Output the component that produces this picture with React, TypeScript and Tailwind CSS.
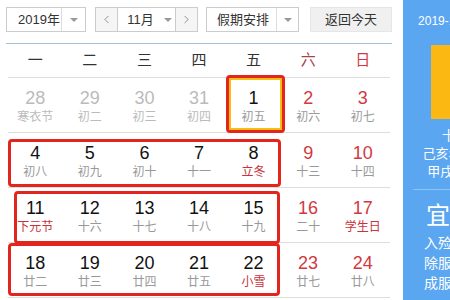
import { ChevronLeft, ChevronRight } from "lucide-react";

type Day = { n: number; l: string; prev?: boolean; fest?: boolean };

const weeks: Day[][] = [
  [
    { n: 28, l: "寒衣节", prev: true },
    { n: 29, l: "初二", prev: true },
    { n: 30, l: "初三", prev: true },
    { n: 31, l: "初四", prev: true },
    { n: 1, l: "初五" },
    { n: 2, l: "初六" },
    { n: 3, l: "初七" },
  ],
  [
    { n: 4, l: "初八" },
    { n: 5, l: "初九" },
    { n: 6, l: "初十" },
    { n: 7, l: "十一" },
    { n: 8, l: "立冬", fest: true },
    { n: 9, l: "十三" },
    { n: 10, l: "十四" },
  ],
  [
    { n: 11, l: "下元节", fest: true },
    { n: 12, l: "十六" },
    { n: 13, l: "十七" },
    { n: 14, l: "十八" },
    { n: 15, l: "十九" },
    { n: 16, l: "二十" },
    { n: 17, l: "学生日", fest: true },
  ],
  [
    { n: 18, l: "廿二" },
    { n: 19, l: "廿三" },
    { n: 20, l: "廿四" },
    { n: 21, l: "廿五" },
    { n: 22, l: "小雪", fest: true },
    { n: 23, l: "廿七" },
    { n: 24, l: "廿八" },
  ],
];

const heads = ["一", "二", "三", "四", "五", "六", "日"];

function Caret() {
  return <span className="w-0 h-0 border-x-[4px] border-x-transparent border-t-[4px] border-t-[#999]" />;
}

function Cell({ d, weekend }: { d: Day; weekend: boolean }) {
  const numColor = d.prev ? "text-[#bbb]" : weekend ? "text-[#d2393f]" : "text-[#111]";
  const lunColor = d.prev ? "text-[#bbb]" : d.fest ? "text-[#c8323a]" : "text-[#999]";
  return (
    <div className="flex flex-col items-center pt-[10px]">
      <span className={`text-[18px] leading-[20px] ${numColor}`}>{d.n}</span>
      <span className={`mt-[1px] text-[12px] leading-[16px] ${lunColor}`}>{d.l}</span>
    </div>
  );
}

export default function App() {
  return (
    <div className="w-[450px] h-[300px] overflow-hidden bg-white flex font-[family-name:'Liberation_Sans','Noto_Sans_CJK_SC',sans-serif] text-[#333]">
      <div className="w-[403px] shrink-0 relative">
        {/* toolbar */}
        <div className="h-[43px] pt-[7px] pl-[6px] flex items-start text-[13px]">
          <div className="flex h-[25px] w-[80px] border border-[#ccc] bg-white">
            <span className="flex-1 pl-[11px] leading-[23px]">2019年</span>
            <span className="w-[24px] border-l border-[#ddd] flex items-center justify-center">
              <Caret />
            </span>
          </div>
          <div className="ml-[9px] flex h-[25px] w-[103px] border border-[#ccc]">
            <span className="w-[22px] bg-[#f5f5f5] border-r border-[#ccc] flex items-center justify-center text-[#666]">
              <ChevronLeft size={13} strokeWidth={1.3} />
            </span>
            <span className="flex-1 flex items-center justify-center gap-[10px]">
              <span className="pl-[6px]">11月</span>
              <Caret />
            </span>
            <span className="w-[22px] bg-[#f5f5f5] border-l border-[#ccc] flex items-center justify-center text-[#666]">
              <ChevronRight size={13} strokeWidth={1.3} />
            </span>
          </div>
          <div className="ml-[8px] flex h-[25px] w-[93px] border border-[#ccc] bg-white">
            <span className="flex-1 pl-[10px] leading-[23px]">假期安排</span>
            <span className="w-[22px] border-l border-[#ddd] flex items-center justify-center">
              <Caret />
            </span>
          </div>
          <button className="ml-[11px] h-[25px] w-[82px] bg-[#f0f0f0] border border-[#e6e6e6] text-[#333] leading-[23px]">
            返回今天
          </button>
        </div>

        {/* calendar */}
        <div className="ml-[6px] w-[386px] border-t border-[#a7c4d6] px-[2px]">
          <div className="grid grid-cols-7 h-[34px] border-b border-[#ddd] text-[15px]">
            {heads.map((h, i) => (
              <div
                key={h}
                className={`flex items-center justify-center ${i === 5 ? "text-[#a8434b]" : i === 6 ? "text-[#d2393f]" : "text-[#333]"}`}
              >
                {h}
              </div>
            ))}
          </div>
          {weeks.map((w, r) => (
            <div key={r} className="grid grid-cols-7 h-[55px] border-b border-[#ddd]">
              {w.map((d, i) => (
                <Cell key={i} d={d} weekend={i >= 5} />
              ))}
            </div>
          ))}
        </div>

        {/* hand-drawn highlight marks */}
        <div className="absolute left-[226px] top-[75px] w-[59px] h-[58px] border-[3px] border-[#e2261d] rounded-[4px]">
          <div className="w-full h-full border-[2px] border-[#f7bd12]" />
        </div>
        <div className="absolute left-[8px] top-[139px] w-[273px] h-[48px] border-[3px] border-[#e2261d] rounded-[4px]" />
        <div className="absolute left-[14px] top-[191px] w-[266px] h-[53px] border-[3px] border-[#e2261d] rounded-[4px]" />
        <div className="absolute left-[8px] top-[243px] w-[272px] h-[53px] border-[3px] border-[#e2261d] rounded-[4px]" />
      </div>

      {/* side panel */}
      <div className="w-[130px] shrink-0 h-full bg-[#5aa6f1] text-white flex flex-col items-center">
        <div className="mt-[12px] text-[12px] leading-[18px] whitespace-nowrap">2019-11-01 星期五</div>
        <div className="mt-[15px] w-[74px] h-[74px] bg-[#fcb812] flex items-center justify-center text-[52px]">1</div>
        <div className="mt-[8px] text-[13px] leading-[18px] whitespace-nowrap">十月初五</div>
        <div className="text-[13px] leading-[18px] whitespace-nowrap">己亥年【猪年】</div>
        <div className="text-[13px] leading-[18px] whitespace-nowrap">甲戌月 丁丑日</div>
        <div className="mt-[8px] w-[110px] border-t border-[#8fc3f6]" />
        <div className="mt-[12px] w-[110px] flex">
          <div className="w-[50px] flex flex-col items-center">
            <span className="text-[24px] leading-[28px]">宜</span>
            <span className="mt-[3px] text-[14px] leading-[20px] whitespace-nowrap">入殓</span>
            <span className="text-[14px] leading-[20px] whitespace-nowrap">除服</span>
            <span className="text-[14px] leading-[20px] whitespace-nowrap">成服</span>
          </div>
          <div className="flex-1 flex flex-col items-center">
            <span className="text-[24px] leading-[28px]">忌</span>
            <span className="mt-[3px] text-[14px] leading-[20px] whitespace-nowrap">嫁娶</span>
            <span className="text-[14px] leading-[20px] whitespace-nowrap">开市</span>
            <span className="text-[14px] leading-[20px] whitespace-nowrap">安床</span>
          </div>
        </div>
      </div>
    </div>
  );
}
